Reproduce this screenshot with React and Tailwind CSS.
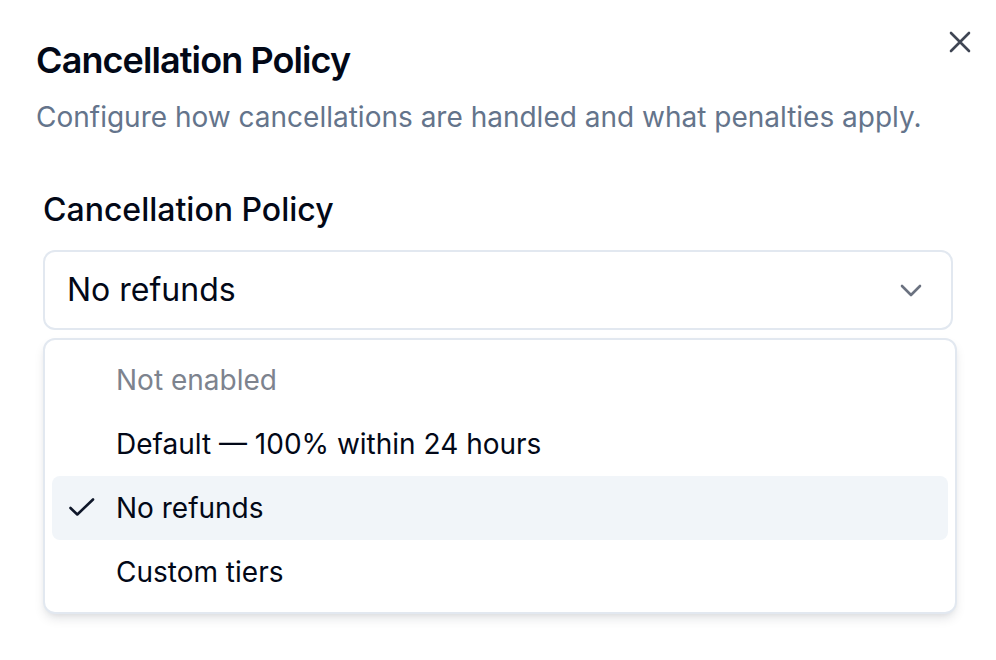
import React from "react";

function Check() {
  return (
    <svg width="32" height="24" viewBox="0 0 32 24" fill="none" className="shrink-0">
      <polyline points="3.5,11 10.3,17.5 26,2.5" stroke="#0f172a" strokeWidth="2.6" strokeLinecap="round" strokeLinejoin="round" />
    </svg>
  );
}

export default function App() {
  const items = [
    { label: "Not enabled", disabled: true },
    { label: "Default \u2014 100% within 24 hours" },
    { label: "No refunds", selected: true },
    { label: "Custom tiers" },
  ];
  return (
    <div
      className="relative w-[996px] h-[660px] bg-white overflow-hidden"
      style={{ fontFamily: "Inter, 'Noto Sans', sans-serif" }}
    >
      <button className="absolute left-[942px] top-[24px] w-[36px] h-[36px] flex items-center justify-center">
        <svg width="36" height="36" viewBox="0 0 36 36" fill="none">
          <path d="M9 9 L27 27 M27 9 L9 27" stroke="#3f4654" strokeWidth="2.6" strokeLinecap="round" />
        </svg>
      </button>
      <div className="pt-[32px] pl-[36px]">
        <h2 className="text-[36px] leading-[56px] font-semibold text-[#020817] tracking-[-0.9px]">
          Cancellation Policy
        </h2>
        <p className="mt-[9px] text-[28px] leading-[40px] text-[#64748b]">
          Configure how cancellations are handled and what penalties apply.
        </p>
        <div className="ml-[7px] w-[914px] mt-[53px]">
          <div className="text-[32px] leading-[40px] font-medium text-[#020817]">Cancellation Policy</div>
          <div className="mt-[20px] w-[910px] h-[80px] border-2 border-[#e2e8f0] rounded-[12px] flex items-center justify-between pl-[22px] pr-[29px]">
            <span className="text-[32px] leading-[40px] text-[#020817]">No refunds</span>
            <svg width="22" height="13" viewBox="0 0 22 13" fill="none">
              <polyline points="2,2 11,11 20,2" stroke="#6b7280" strokeWidth="2.6" strokeLinecap="round" strokeLinejoin="round" />
            </svg>
          </div>
          <div className="mt-[8px] border-2 border-[#e2e8f0] rounded-[12px] px-[7px] py-[8px] bg-white shadow-[0_6px_12px_-2px_rgba(15,23,42,0.12),0_3px_6px_-3px_rgba(15,23,42,0.08)]">
            {items.map((it) => (
              <div
                key={it.label}
                className={
                  "h-[64px] flex items-center rounded-[8px] " +
                  (it.selected ? "bg-[#f1f5f9]" : "")
                }
              >
                <div className="w-[64px] h-[64px] flex items-start pl-[15px] pt-[21px]">
                  {it.selected ? <Check /> : null}
                </div>
                <span
                  className={
                    "text-[28px] leading-[40px] " +
                    (it.disabled ? "text-[#7d838e]" : "text-[#020817]")
                  }
                >
                  {it.label}
                </span>
              </div>
            ))}
          </div>
        </div>
      </div>
    </div>
  );
}
